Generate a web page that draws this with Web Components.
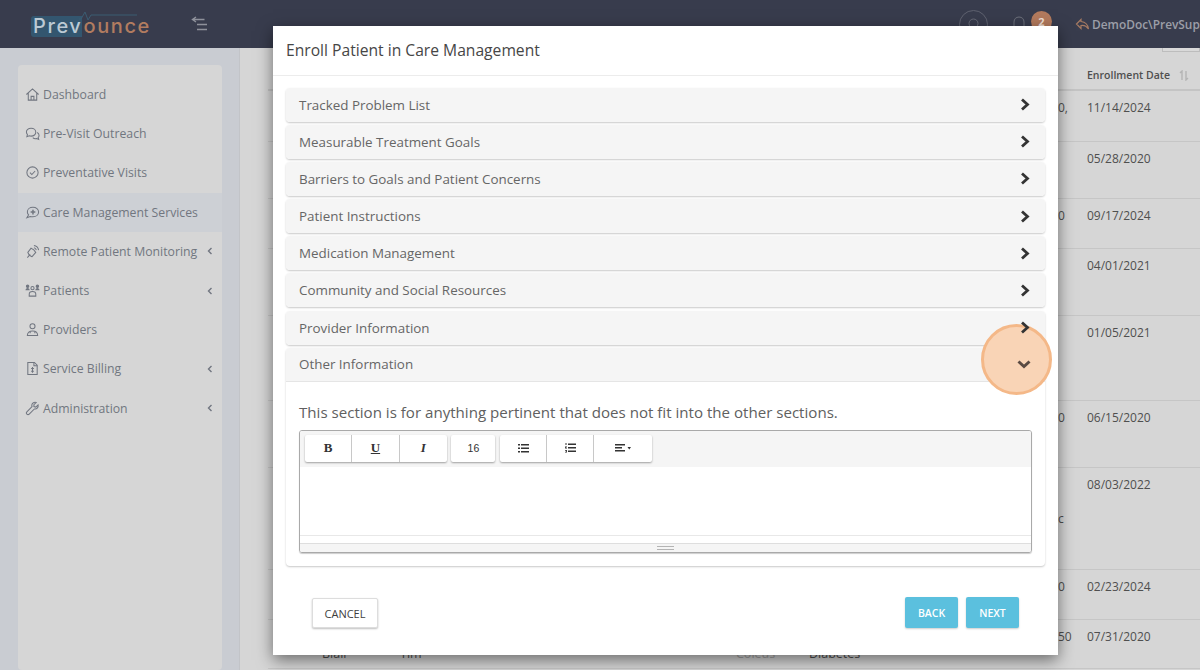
<!DOCTYPE html>
<html>
<head>
<meta charset="utf-8">
<style>
  html, body { margin: 0; padding: 0; height: 670px; overflow: hidden; }
  body { font-family: "Open Sans", "Liberation Sans", sans-serif; background: #d6d6d6; }
</style>
</head>
<body>
<app-shell>
  <top-bar slot="top"></top-bar>
  <side-nav slot="side">
    <nav-item icon="home">Dashboard</nav-item>
    <nav-item icon="chat">Pre-Visit Outreach</nav-item>
    <nav-item icon="check">Preventative Visits</nav-item>
    <nav-item icon="plus" active>Care Management Services</nav-item>
    <nav-item icon="dish" caret>Remote Patient Monitoring</nav-item>
    <nav-item icon="people" caret>Patients</nav-item>
    <nav-item icon="doctor">Providers</nav-item>
    <nav-item icon="bill" caret>Service Billing</nav-item>
    <nav-item icon="wrench" caret>Administration</nav-item>
  </side-nav>
  <back-table slot="main"></back-table>
</app-shell>

<enroll-modal>
  <acc-row>Tracked Problem List</acc-row>
  <acc-row>Measurable Treatment Goals</acc-row>
  <acc-row>Barriers to Goals and Patient Concerns</acc-row>
  <acc-row>Patient Instructions</acc-row>
  <acc-row>Medication Management</acc-row>
  <acc-row>Community and Social Resources</acc-row>
  <acc-row>Provider Information</acc-row>
  <acc-row open>Other Information
    <div slot="body">
      <p class="hint">This section is for anything pertinent that does not fit into the other sections.</p>
      <note-editor></note-editor>
    </div>
  </acc-row>
</enroll-modal>
<click-spot></click-spot>

<script>
// --- Icons for the side menu ---
const navIcons = {
  home: '<path d="M1.500 8 8 2l6.500 6M3.500 6.500V14h9V6.500M6.500 14v-4h3v4"/>',
  chat: '<path d="M6.500 2.500c-3 0-5 1.700-5 4 0 1 .4 1.900 1.100 2.600L2 11.500l2.600-1c.6.200 1.200.300 1.900.300 3 0 5-1.800 5-4.100s-2-4.200-5-4.200z"/><path d="M13 7c1.300.7 2 1.700 2 3 0 .9-.4 1.700-1 2.300l.6 2-2.200-.9c-1.400.4-3 .1-4.100-.9"/>',
  check: '<circle cx="8" cy="8" r="6"/><path d="m5.300 8.200 2 2 3.500-3.800"/>',
  plus: '<path d="M8.500 2.500c-3.500 0-6 2.200-6 5 0 1.200.5 2.300 1.300 3.100L2 13.500l3.500-1.300c.9.300 1.900.4 3 .4 3.400 0 6-2.200 6-5.100s-2.600-5-6-5z"/><path d="M8.500 5v5M6 7.500h5" stroke-width="1.600"/>',
  dish: '<path d="M3 9c.8 2.500 2.300 3.800 4.500 4.500l4-4.500C10.500 7 8.500 5.200 6.500 4.500z"/><path d="M2.500 14.500 5.500 11M9.500 1.500c2.500.3 4.500 2.200 5 5M9.500 4c1.200.2 2.300 1.200 2.600 2.500"/>',
  people: '<circle cx="8" cy="5.500" r="1.700"/><circle cx="2.800" cy="3.500" r="1.300" fill="currentColor"/><circle cx="13.200" cy="3.500" r="1.300" fill="currentColor"/><path d="M.5 7.800c0-1.500 1-2.500 2.300-2.500s2.200 1 2.200 2.500zM11 7.800c0-1.500 1-2.500 2.200-2.500s2.300 1 2.300 2.500z" fill="currentColor" stroke="none"/><path d="M4.500 14v-2c0-1.800 1.500-3 3.500-3s3.500 1.200 3.500 3v2z"/>',
  doctor: '<circle cx="8" cy="4.500" r="2.700"/><path d="M2.500 14.500c0-3 2.300-5 5.500-5s5.500 2 5.500 5z"/><path d="M5.500 10v2M10.500 10v2"/>',
  bill: '<path d="M3 1.500h7l3 3v10H3z"/><path d="M9.500 1.500v3.500H13M8 6.500v6M6.500 8h3M6.500 11h3"/>',
  wrench: '<path d="M14 4.200 11.500 6.500 9.500 6V4l2.400-2.400C9.800 1 7.700 2 7.300 4c-.1.700 0 1.300.2 1.900L2 11.500c-.8.800-.8 1.800 0 2.500.8.700 1.700.7 2.500-.1L10 8.500c2.300.6 4.600-1.400 4-4.300z"/>'
};

class AppShell extends HTMLElement {
  constructor() {
    super();
    this.attachShadow({ mode: 'open' });
    this.shadowRoot.innerHTML = `
      <style>
        :host { display: grid; grid-template-columns: 240px 1fr; grid-template-rows: 48px 622px; height: 670px; width: 1200px; overflow: hidden; }
        .top { grid-column: 1 / 3; }
      </style>
      <div class="top"><slot name="top"></slot></div>
      <slot name="side"></slot>
      <slot name="main"></slot>
    `;
  }
}
customElements.define('app-shell', AppShell);

class TopBar extends HTMLElement {
  constructor() {
    super();
    this.attachShadow({ mode: 'open' });
    this.shadowRoot.innerHTML = `
      <style>
        :host { display: flex; align-items: center; height: 48px; background: #383c4d; font-family: "Open Sans", sans-serif; white-space: nowrap; }
        .logo { margin: 4px 0 0 31px; width: 118px; height: 32px; display: flex; align-items: center; font: 500 20px/32px "Inter", "DejaVu Sans", sans-serif; letter-spacing: 1.600px; position: relative; }
        .logo b { font-weight: 500; background: #33566f; color: #bccad4; height: 21px; line-height: 20px; width: 51px; padding-left: 2px; border-radius: 3px 0 0 3px; }
        .logo i { font-style: normal; color: #b27c60; height: 21px; line-height: 20px; margin-left: 1px; }
        .logo svg { position: absolute; left: 48px; top: -1px; }
        .toggle { margin-left: 41px; width: 20px; height: 20px; color: #8e919b; }
        .right { margin-left: auto; display: flex; align-items: center; color: #9c9fa8; }
        .search { width: 29px; height: 29px; box-sizing: border-box; border: 1px solid #5f6270; border-radius: 50%; display: flex; align-items: center; justify-content: center; }
        .bell { position: relative; margin-left: 23px; width: 16px; height: 20px; }
        .badge { position: absolute; left: 20px; top: -3px; width: 21px; height: 21px; border-radius: 50%; background: #b37a5d; color: #efdfd4; font-size: 11px; font-weight: 700; line-height: 21px; text-align: center; }
        .user { margin-left: 48px; width: 125px; overflow: hidden; display: flex; align-items: center; gap: 2px; font-size: 11.900px; font-weight: 600; }
        .user svg { flex: none; }
      </style>
      <div class="logo"><b>Prev</b><i>ounce</i>
        <svg width="58" height="12" viewBox="0 0 58 12" fill="none" stroke="#3b5c72" stroke-width="1"><path d="M0 10h2l4-7 3 8 3-5h46"/></svg>
      </div>
      <svg class="toggle" viewBox="0 0 20 20" fill="none" stroke="currentColor" stroke-width="1.400"><path d="M6 3 2.500 5.500 6 8M2.500 5.500h12M7 10.500h10M7 15.500h10"/></svg>
      <div class="right">
        <div class="search"><svg width="14" height="14" viewBox="0 0 14 14" fill="none" stroke="#686b78" stroke-width="1"><circle cx="6.500" cy="6.500" r="4.500"/><path d="m10 10 3 3"/></svg></div>
        <div class="bell"><svg width="16" height="20" viewBox="0 0 16 20" fill="none" stroke="#6d707c" stroke-width="1"><path d="M3 15V8c0-3 2-5 5-5s5 2 5 5v7l1.500 2h-13z"/></svg><span class="badge">2</span></div>
        <div class="user"><svg width="15" height="13" viewBox="0 0 15 13" fill="none" stroke="#a67a62" stroke-width="1.200"><path d="M6 1.500 1.500 6 6 10.500V7.500c3-.5 5.500.5 7.500 3.500-.5-4-3-7-7.500-7.500z"/></svg>DemoDoc\\PrevSup</div>
      </div>
    `;
  }
}
customElements.define('top-bar', TopBar);

class SideNav extends HTMLElement {
  constructor() {
    super();
    this.attachShadow({ mode: 'open' });
    this.shadowRoot.innerHTML = `
      <style>
        :host { display: block; background: #c9ccd2; padding: 17px 17px 0 18px; border-right: 1px solid #c2c4c8; box-sizing: border-box; height: 622px; }
        .card { background: #d6d6d6; border-radius: 4px; padding: 10px 0 0; height: 605px; box-sizing: border-box; }
      </style>
      <div class="card"><slot></slot></div>
    `;
  }
}
customElements.define('side-nav', SideNav);

class NavItem extends HTMLElement {
  constructor() {
    super();
    this.attachShadow({ mode: 'open' });
    const icon = navIcons[this.getAttribute('icon')] || '';
    this.shadowRoot.innerHTML = `
      <style>
        :host { display: flex; align-items: center; height: 39.200px; padding-left: 7px; color: #717680; font: 400 12.250px "Open Sans", sans-serif; white-space: nowrap; }
        :host([active]) { background: #cdd0d5; }
        svg.ic { width: 15px; height: 15px; flex: none; margin-right: 3px; }
        .caret { margin-left: auto; margin-right: 9px; width: 6px; height: 8px; }
      </style>
      <svg class="ic" viewBox="0 0 16 16" fill="none" stroke="currentColor" stroke-width="1.100">${icon}</svg>
      <slot></slot>
      ${this.hasAttribute('caret') ? '<svg class="caret" viewBox="0 0 6 8" fill="none" stroke="currentColor" stroke-width="1.400"><path d="M4.500 1 1.500 4l3 3"/></svg>' : ''}
    `;
  }
}
customElements.define('nav-item', NavItem);

// row heights read off the lines of the table behind the dialog
const backRows = [
  [51, '0,', '11/14/2024'], [57, '', '05/28/2020'], [50, '0', '09/17/2024'], [67, '', '04/01/2021'],
  [85, '', '01/05/2021'], [67, '0', '06/15/2020'], [102, '<br><br>c', '08/03/2022'], [50, '0', '02/23/2024'], [49, '50', '07/31/2020']
];

class BackTable extends HTMLElement {
  constructor() {
    super();
    this.attachShadow({ mode: 'open' });
    const rows = backRows.map(r => `
      <div class="row" style="height:${r[0]}px">
        <span class="note">${r[1]}</span><span class="date">${r[2]}</span>
      </div>`).join('');
    this.shadowRoot.innerHTML = `
      <style>
        :host { display: block; padding-left: 28px; font: 400 12px "Open Sans", sans-serif; color: #4f4f4f; position: relative; }
        .head { border-bottom: 2px solid #c4c4c4; padding-left: 819px; display: flex; align-items: center; font-size: 10.500px; font-weight: 600; white-space: nowrap; padding-top: 13px; box-sizing: border-box; height: 43px; }
        .head svg { margin-left: 9px; }
        .row { display: flex; border-bottom: 1px solid #c6c6c6; box-sizing: border-box; padding-top: 8px; line-height: 17px; white-space: nowrap; }
        .note { width: 29px; margin-left: 790px; flex: none; }
        .tab { position: absolute; right: 0; top: 0; width: 36px; height: 3px; background: #d9d9d9; border: 1px solid #bdbdbd; border-top: 0; }
        .last { position: absolute; left: 82px; top: 597px; font-size: 12.500px; }
        .last span { position: absolute; top: 0; white-space: nowrap; }
      </style>
      <div class="tab"></div>
      <div class="head">Enrollment Date
        <svg width="10" height="11" viewBox="0 0 10 11" fill="none" stroke="#b4b4b4" stroke-width="1.400"><path d="M3 10V1L1 3M7 1v9l2-2"/></svg>
      </div>
      ${rows}
      <div class="last"><span>Blair</span><span style="left:78px">Tim</span><span style="left:414px;color:#a5a5a5">Coleus</span><span style="left:487px">Diabetes</span></div>
    `;
  }
}
customElements.define('back-table', BackTable);

class EnrollModal extends HTMLElement {
  constructor() {
    super();
    this.attachShadow({ mode: 'open' });
    this.shadowRoot.innerHTML = `
      <style>
        :host { position: absolute; left: 273px; top: 26px; width: 785px; height: 629px; background: #fff; box-shadow: 0 5px 15px rgba(0,0,0,.5); font-family: "Open Sans", sans-serif; display: flex; flex-direction: column; }
        header { height: 50px; box-sizing: border-box; border-bottom: 1px solid #ececec; padding-left: 13px; font-size: 15.650px; line-height: 48px; color: #464646; flex: none; }
        .list { padding: 11.500px 13px 0; display: flex; flex-direction: column; gap: 3.200px; }
        footer { margin-top: auto; height: 88px; display: flex; align-items: flex-start; padding: 30px 39px 0; box-sizing: border-box; gap: 8px; }
        button { font: 600 10.500px "Open Sans", sans-serif; height: 31px; border-radius: 2px; border: 0; padding: 0; }
        .cancel { width: 66px; height: 30px; margin-top: 1px; background: #fff; border: 1px solid #ddd; color: #3e3e3e; box-shadow: 0 1px 2px rgba(0,0,0,.25); font-weight: 400; font-size: 11px; margin-right: auto; }
        .go { background: #5bc0de; color: #fff; box-shadow: 0 1px 2px rgba(0,0,0,.2); width: 53px; }
      </style>
      <header>Enroll Patient in Care Management</header>
      <div class="list"><slot></slot></div>
      <footer>
        <button class="cancel">CANCEL</button>
        <button class="go">BACK</button>
        <button class="go">NEXT</button>
      </footer>
    `;
  }
}
customElements.define('enroll-modal', EnrollModal);

class AccRow extends HTMLElement {
  constructor() {
    super();
    this.attachShadow({ mode: 'open' });
    const open = this.hasAttribute('open');
    const chevron = open
      ? '<svg width="14" height="9" viewBox="0 0 14 9" fill="none" stroke="#5a4a42" stroke-width="3"><path d="M1.500 1.500 7 6.500l5.500-5"/></svg>'
      : '<svg width="10" height="13" viewBox="0 0 10 13" fill="none" stroke="#333" stroke-width="2.800"><path d="M2 1.500 7.500 6.500 2 11.500"/></svg>';
    this.shadowRoot.innerHTML = `
      <style>
        :host { display: block; background: #fff; border-radius: 4px; box-shadow: 0 1px 2px rgba(0,0,0,.22); font: 400 13.400px "Open Sans", sans-serif; color: #666; }
        .bar { height: 34px; box-sizing: border-box; background: #f5f5f5; border-radius: 4px; display: flex; align-items: center; padding: 0 15px 0 13px; }
        /* chevrons sit above the highlight dot */
        .bar svg { margin-left: auto; position: relative; z-index: 2; }
        :host([open]) .bar { border-bottom: 1px solid #e5e5e5; border-radius: 4px 4px 0 0; padding-right: 14px; }
        .body { padding: 0 13px 13px; }
        ::slotted([slot="body"]) { display: block; }
      </style>
      <div class="bar"><span><slot></slot></span>${chevron}</div>
      ${open ? '<div class="body"><slot name="body"></slot></div>' : ''}
    `;
  }
  connectedCallback() {
    const hint = this.querySelector('.hint');
    if (hint) {
      hint.style.cssText = 'margin:0;padding:20px 0 8px;font-size:15.100px;line-height:20px;color:#606060;white-space:nowrap';
    }
  }
}
customElements.define('acc-row', AccRow);

class NoteEditor extends HTMLElement {
  constructor() {
    super();
    this.attachShadow({ mode: 'open' });
    const listIcon = '<svg width="11" height="9" viewBox="0 0 11 9" fill="#333"><path d="M0 0h2v1.500H0zM3 0h8v1.500H3zM0 3.500h2V5H0zM3 3.500h8V5H3zM0 7h2v1.500H0zM3 7h8v1.500H3z"/></svg>';
    const numIcon = '<svg width="11" height="10" viewBox="0 0 11 10" fill="#333"><path d="M3 .5h8V2H3zM3 4h8v1.500H3zM3 7.500h8V9H3zM.5 0h1v2H.5zM0 3.500h2v.7H.8v.6H2v.7H0zM0 7h2v2.500H0v-.6h1.300v-.3H.5v-.5h.8v-.4H0z"/></svg>';
    const alignIcon = '<svg width="16" height="8" viewBox="0 0 16 8" fill="#333"><path d="M0 0h10v1.500H0zM0 3h7v1.500H0zM0 6h10v1.500H0zM12.500 3h3.500L14.250 5.500z"/></svg>';
    this.shadowRoot.innerHTML = `
      <style>
        :host { display: block; border: 1px solid #a9a9a9; border-radius: 3px; box-shadow: 0 1px 1px rgba(0,0,0,.2); height: 123px; box-sizing: border-box; overflow: hidden; }
        .tools { height: 36px; background: #f5f5f5; display: flex; gap: 4.500px; padding: 4px 0 0 5px; box-sizing: border-box; }
        .grp { display: flex; height: 27px; background: #fff; box-shadow: 0 1px 2px rgba(0,0,0,.35); border-radius: 2px; }
        .btn { display: flex; align-items: center; justify-content: center; width: 47.300px; height: 27px; border-right: 1px solid #c8c8c8; box-sizing: border-box; color: #333; font: 400 13px "Liberation Serif", serif; }
        .btn:last-child { border-right: 0; }
        .b { font-weight: 700; } .u { font-weight: 700; text-decoration: underline; } .i { font-style: italic; font-weight: 700; }
        .size { width: 44px; font: 400 10.500px "Liberation Sans", sans-serif; }
        .wide { width: 58px; }
        .area { height: 76px; background: #fff; display: flex; flex-direction: column; justify-content: flex-end; }
        .area i { display: block; height: 7px; border-top: 1px solid #e8e8e8; }
        .grip { height: 9px; background: #f5f5f5; border-top: 1px solid #dedede; display: flex; justify-content: center; align-items: center; box-sizing: border-box; }
        .grip i { display: block; width: 17px; height: 2px; border-top: 1px solid #b4b4b4; border-bottom: 1px solid #b4b4b4; }
      </style>
      <div class="tools">
        <div class="grp"><div class="btn b">B</div><div class="btn u">U</div><div class="btn i">I</div></div>
        <div class="grp"><div class="btn size">16</div></div>
        <div class="grp"><div class="btn">${listIcon}</div><div class="btn">${numIcon}</div><div class="btn wide">${alignIcon}</div></div>
      </div>
      <div class="area"><i></i></div>
      <div class="grip"><i></i></div>
    `;
  }
}
customElements.define('note-editor', NoteEditor);

class ClickSpot extends HTMLElement {
  constructor() {
    super();
    this.attachShadow({ mode: 'open' });
    this.shadowRoot.innerHTML = `
      <style>
        :host { position: absolute; left: 981px; top: 324px; width: 71px; height: 71px; box-sizing: border-box; border-radius: 50%; background: #f9d4b6; border: 3px solid #f4b888; }
      </style>
    `;
  }
}
customElements.define('click-spot', ClickSpot);
</script>
</body>
</html>
